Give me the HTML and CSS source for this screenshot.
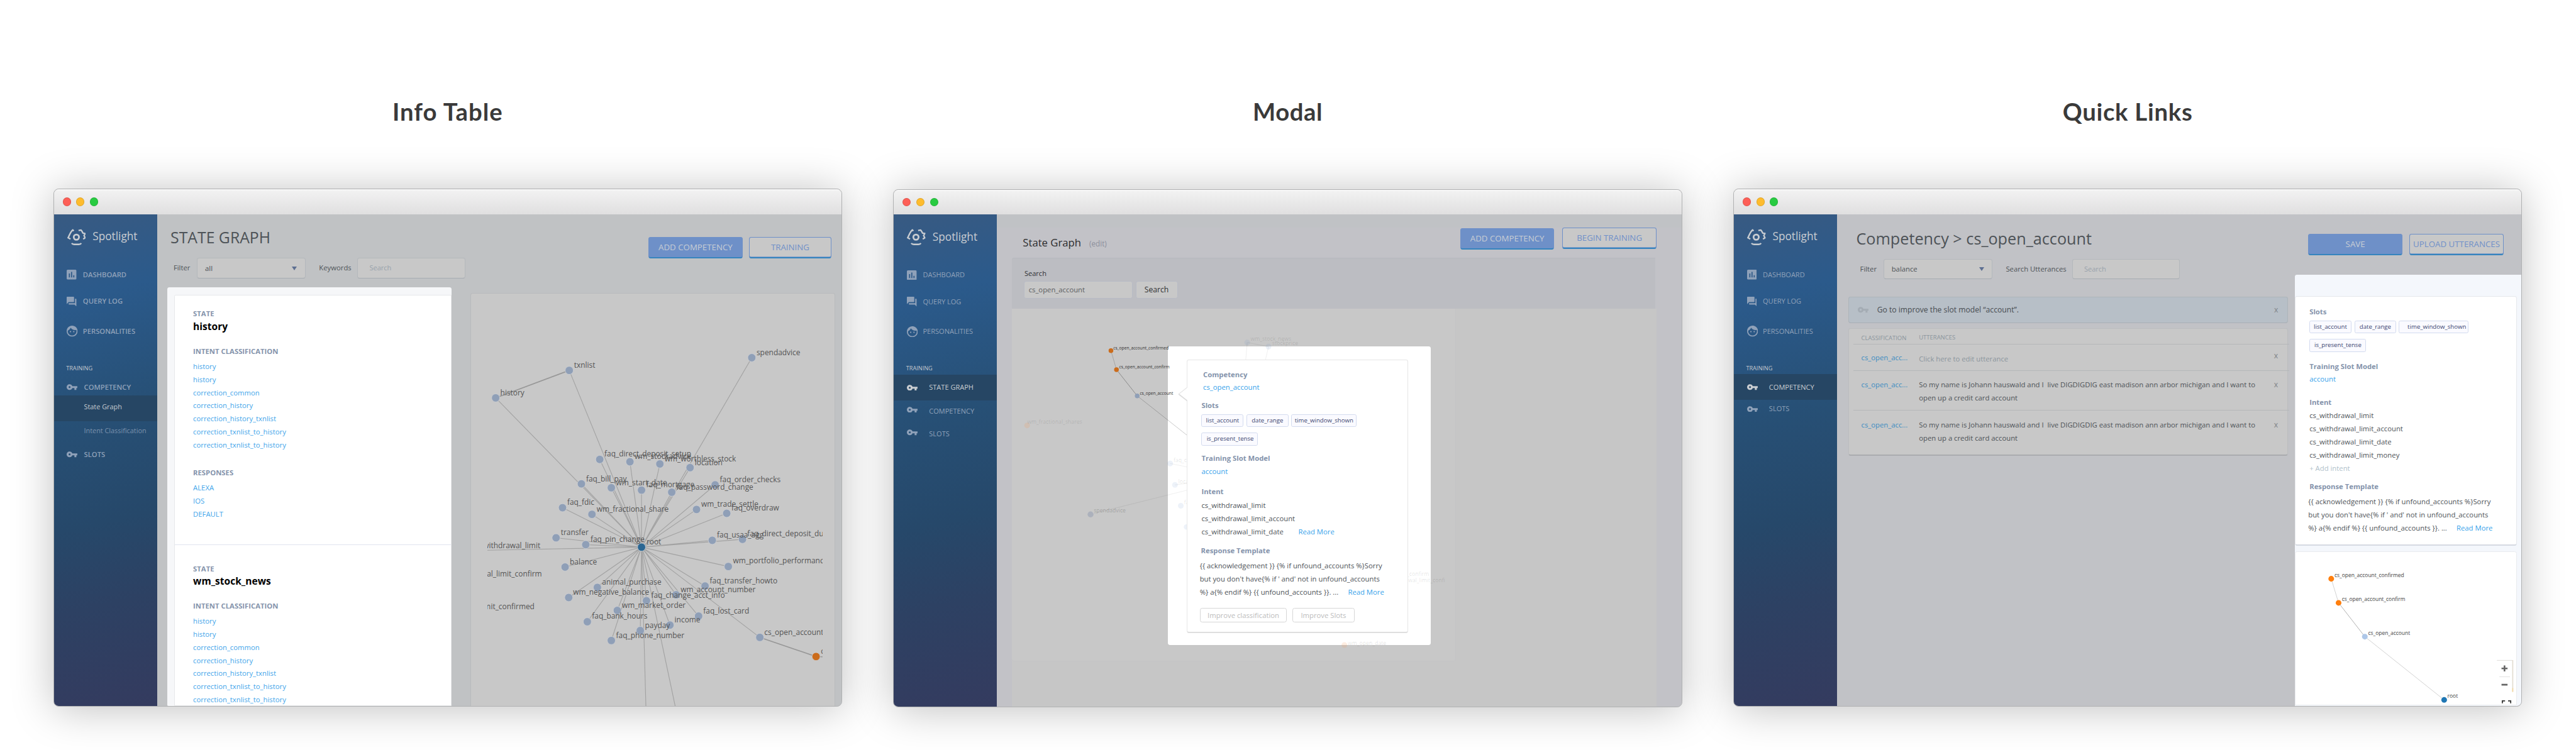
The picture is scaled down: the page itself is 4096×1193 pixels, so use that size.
FILE: index.html
```html
<!DOCTYPE html>
<html lang="en">
<head>
<meta charset="utf-8">
<title>Spotlight screens</title>
<link rel="stylesheet" href="styles.css">
</head>
<body>
<svg class="defs" aria-hidden="true">
  <symbol id="i-logo" viewBox="0 0 34 30"><g fill="none" stroke="currentColor" stroke-width="2.7"><circle cx="16.6" cy="15.3" r="4.8" stroke-width="3.2"/><path d="M9.2 1.2l2.6 2.6M9.8 2.2C6 5.5 4.6 10 1.6 16.2l4.2 2.4M20.6 3l4.4-.8c1.600 1.500 2.600 3.400 3.600 5.600l4 .8-2 3.800 2.200 4-3.800 2.400M8 26.300c1.200 1.700 2.600 2.200 4.600 2.200h8.400c2 0 3.600-.5 4.600-2.200"/></g></symbol>
  <symbol id="i-dash" viewBox="3 3 18 18"><path fill="currentColor" d="M19 3H5c-1.100 0-2 .9-2 2v14c0 1.100.9 2 2 2h14c1.100 0 2-.9 2-2V5c0-1.100-.9-2-2-2zM9 17H7v-7h2v7zm4 0h-2V7h2v10zm4 0h-2v-4h2v4z"/></symbol>
  <symbol id="i-log" viewBox="2 2 20 20"><path fill="currentColor" d="M21 6h-2v9H6v2c0 .55.45 1 1 1h11l4 4V7c0-.55-.45-1-1-1zm-4 6V3c0-.55-.45-1-1-1H3c-.55 0-1 .45-1 1v14l4-4h10c.55 0 1-.45 1-1z"/></symbol>
  <symbol id="i-face" viewBox="2 2 20 20"><path fill="currentColor" d="M9 11.750c-.69 0-1.250.56-1.250 1.250s.56 1.250 1.250 1.250 1.250-.56 1.250-1.250-.56-1.250-1.250-1.250zm6 0c-.69 0-1.250.56-1.250 1.250s.56 1.250 1.250 1.250 1.250-.56 1.250-1.250-.56-1.250-1.250-1.250zM12 2C6.480 2 2 6.480 2 12s4.480 10 10 10 10-4.480 10-10S17.520 2 12 2zm0 18c-4.410 0-8-3.590-8-8 0-.29.02-.58.05-.86 2.360-1.050 4.230-2.980 5.210-5.370C11.070 8.330 14.050 10 17.420 10c.78 0 1.530-.09 2.250-.26.21.71.33 1.470.33 2.260 0 4.410-3.590 8-8 8z"/></symbol>
  <symbol id="i-key" viewBox="1 6 22 12"><path fill="currentColor" d="M12.650 10C11.830 7.670 9.610 6 7 6c-3.310 0-6 2.690-6 6s2.690 6 6 6c2.610 0 4.830-1.670 5.650-4H17v4h4v-4h2v-4H12.650zM7 14c-1.100 0-2-.9-2-2s.9-2 2-2 2 .9 2 2-.9 2-2 2z"/></symbol>
</svg>

<main class="board">

  <!-- Info table -->
  <section class="col">
    <h1 class="title title-info">Info Table</h1>
    <div class="window">
      <div class="bar"><i class="dot red"></i><i class="dot amber"></i><i class="dot green"></i></div>
      <div class="app">
        <nav class="side side-bold">
          <div class="brand"><svg><use href="#i-logo"/></svg><span>Spotlight</span></div>
          <div class="nav nav-dash"><svg class="sq"><use href="#i-dash"/></svg><span>DASHBOARD</span></div>
          <div class="nav nav-log"><svg class="sq"><use href="#i-log"/></svg><span>QUERY LOG</span></div>
          <div class="nav nav-face"><svg class="rd"><use href="#i-face"/></svg><span>PERSONALITIES</span></div>
          <div class="group">TRAINING</div>
          <div class="nav key-nav comp-open"><svg class="key"><use href="#i-key"/></svg><span>COMPETENCY</span></div>
          <div class="sub active">State Graph</div>
          <div class="sub">Intent Classification</div>
          <div class="nav key-nav slots-open"><svg class="key"><use href="#i-key"/></svg><span>SLOTS</span></div>
        </nav>
        <div class="page page-info">
          <header class="head">
            <h2 class="h-state">STATE GRAPH</h2>
            <div class="btns"><span class="btn solid b-add">ADD COMPETENCY</span><span class="btn line b-train">TRAINING</span></div>
          </header>
          <div class="filters">
            <label class="lab lab-filter">Filter</label><div class="select">all<i class="caret"></i></div>
            <label class="lab lab-key">Keywords</label><div class="search">Search</div>
          </div>
          <div class="info-row">
            <div class="sheet">
              <div class="sheet-card">
                <article class="entry">
                  <h3>STATE</h3>
                  <p class="name">history</p>
                  <h3 class="mid">INTENT CLASSIFICATION</h3>
                  <ul><li>history</li><li>history</li><li>correction_common</li><li>correction_history</li><li>correction_history_txnlist</li><li>correction_txnlist_to_history</li><li>correction_txnlist_to_history</li></ul>
                  <h3 class="resp">RESPONSES</h3>
                  <ul><li>ALEXA</li><li>IOS</li><li>DEFAULT</li></ul>
                </article>
                <article class="entry second">
                  <h3>STATE</h3>
                  <p class="name">wm_stock_news</p>
                  <h3 class="mid">INTENT CLASSIFICATION</h3>
                  <ul><li>history</li><li>history</li><li>correction_common</li><li>correction_history</li><li>correction_history_txnlist</li><li>correction_txnlist_to_history</li><li>correction_txnlist_to_history</li></ul>
                </article>
              </div>
            </div>
            <div class="graph-panel">
              <svg class="graph" viewBox="890.9 536.4 612.5 755">
                <g class="edges">
                  <path class="thick" d="M906 727.1L1040.500 676.800"/>
                  <path d="M1172.600 1000L906 727.1"/>
                  <path d="M1172.600 1000L1040.500 676.800"/>
                  <path d="M1172.600 1000L1374.100 653.600"/>
                  <path d="M1172.600 1000L1096.200 839.600M1172.600 1000L1151.400 843.900M1172.600 1000L1206.100 847.900M1172.600 1000L1261.300 854.600M1172.600 1000L1062.700 884.300M1172.600 1000L1117.400 891.400M1172.600 1000V895.700M1172.600 1000L1227.800 899.600M1172.600 1000L1307.100 886.100"/>
                  <path d="M1172.600 1000L1028.200 927.900M1172.600 1000L1082 940M1172.600 1000L1273.100 931.100M1172.600 1000L1328.300 938.200M1172.600 1000L1016.400 982.900M1172.600 1000L1070.700 995.400M1172.600 1000L1301.900 987.500M1172.600 1000L1357.100 985.700M1172.600 1000L1032.900 1036.400M1172.600 1000L1331.200 1035.400"/>
                  <path d="M1172.600 1000L1091.900 1073.600M1172.600 1000L1039.500 1092.100M1172.600 1000L1288.700 1071.100M1172.600 1000L1235.800 1087.100M1172.600 1000L1181.600 1097.900M1172.600 1000L1128.300 1115.700M1172.600 1000L1073.500 1136.400M1172.600 1000L1276.900 1126.100M1172.600 1000L1224.500 1142.500M1172.600 1000L1170.300 1152.500M1172.600 1000L1117.400 1170.700M1172.600 1000L1388.800 1165"/>
                  <path d="M1172.600 1000L890 1005.700M1172.600 1000L1180.600 1292M1172.600 1000L1234.400 1292"/>
                  <path class="thick" d="M1388.800 1165L1491.600 1200L1503.400 1200.500"/>
                </g>
                <g class="nodes">
                  <circle cx="906" cy="727.1" r="7.4"/><circle cx="1040.5" cy="676.8" r="7.4"/><circle cx="1374.1" cy="653.6" r="7.4"/>
                  <circle cx="1096.2" cy="839.6" r="7.4"/><circle cx="1151.4" cy="843.9" r="7.4"/><circle cx="1206.1" cy="847.9" r="7.4"/><circle cx="1261.3" cy="854.6" r="7.4"/>
                  <circle cx="1062.7" cy="884.3" r="7.4"/><circle cx="1117.4" cy="891.4" r="7.4"/><circle cx="1172.6" cy="895.7" r="7.4"/><circle cx="1227.8" cy="899.6" r="7.4"/><circle cx="1307.1" cy="886.1" r="7.4"/>
                  <circle cx="1028.2" cy="927.9" r="7.4"/><circle cx="1082" cy="940" r="7.4"/><circle cx="1273.1" cy="931.1" r="7.4"/><circle cx="1328.3" cy="938.2" r="7.4"/>
                  <circle cx="1016.4" cy="982.9" r="7.4"/><circle cx="1070.7" cy="995.4" r="7.4"/><circle cx="1301.9" cy="987.5" r="7.4"/><circle cx="1357.1" cy="985.7" r="7.4"/>
                  <circle cx="1032.9" cy="1036.4" r="7.4"/><circle cx="1331.2" cy="1035.4" r="7.4"/><circle cx="1091.9" cy="1073.6" r="7.4"/><circle cx="1039.5" cy="1092.1" r="7.4"/>
                  <circle cx="1288.7" cy="1071.1" r="7.4"/><circle cx="1235.8" cy="1087.1" r="7.4"/><circle cx="1181.6" cy="1097.9" r="7.4"/><circle cx="1128.3" cy="1115.7" r="7.4"/>
                  <circle cx="1073.5" cy="1136.4" r="7.4"/><circle cx="1276.9" cy="1126.1" r="7.4"/><circle cx="1224.5" cy="1142.5" r="7.4"/><circle cx="1170.3" cy="1152.5" r="7.4"/>
                  <circle cx="1117.4" cy="1170.7" r="7.4"/><circle cx="1388.8" cy="1165" r="7.4"/>
                  <circle class="orange" cx="1491.6" cy="1200" r="7.4"/><circle class="root" cx="1172.6" cy="1000" r="7.4"/>
                </g>
                <g class="labels">
                  <text x="914.6" y="722.3">history</text><text x="1049.2" y="672">txnlist</text><text x="1382.800" y="648.600">spendadvice</text>
                  <text x="1104.800" y="834.600">faq_direct_deposit_setup</text><text x="1160" y="838.900">wm_stockadvice</text><text x="1214.700" y="842.900">wm_worthless_stock</text><text x="1269.900" y="850.100">location</text>
                  <text x="1071.300" y="879.600">faq_bill_pay</text><text x="1126" y="886.500">wm_start_date</text><text x="1181.200" y="890.700">faq_mortgage</text><text x="1236.400" y="895">faq_password_change</text><text x="1315.700" y="881.100">faq_order_checks</text>
                  <text x="1036.800" y="923">faq_fdic</text><text x="1090.600" y="935.700">wm_fractional_share</text><text x="1281.700" y="926">wm_trade_settle</text><text x="1336.900" y="933">faq_overdraw</text>
                  <text x="1025" y="978">transfer</text><text x="1079.300" y="990.500">faq_pin_change</text><text x="1181.600" y="994.500">root</text><text x="1310.500" y="982">faq_usaa_agg</text><text x="1366" y="980.500">faq_direct_deposit_due</text>
                  <text x="1041.500" y="1031.500">balance</text><text x="1339.800" y="1030">wm_portfolio_performance</text><text x="1100.500" y="1069">animal_purchase</text><text x="1047.600" y="1087.500">wm_negative_balance</text>
                  <text x="1297.300" y="1066.500">faq_transfer_howto</text><text x="1244" y="1082">wm_account_number</text><text x="1190.200" y="1093">faq_change_acct_info</text><text x="1136.900" y="1111.500">wm_market_order</text>
                  <text x="1082" y="1131">faq_bank_hours</text><text x="1285.500" y="1121.500">faq_lost_card</text><text x="1233" y="1138">income</text><text x="1178.900" y="1148">payday</text><text x="1126" y="1166">faq_phone_number</text>
                  <text x="1397" y="1160.500">cs_open_account</text><text x="1500.400" y="1195.500">cs</text>
                  <text class="end" x="987.6" y="1002">cs_withdrawal_limit</text><text class="end" x="990.5" y="1054.2">cs_withdrawal_limit_confirm</text><text class="end" x="977" y="1113">cs_withdrawal_limit_confirmed</text>
                </g>
              </svg>
            </div>
          </div>
        </div>
      </div>
    </div>
  </section>

  <!-- Modal -->
  <section class="col col-modal">
    <h1 class="title title-modal">Modal</h1>
    <div class="window">
      <div class="bar"><i class="dot red"></i><i class="dot amber"></i><i class="dot green"></i></div>
      <div class="app">
        <nav class="side">
          <div class="brand"><svg><use href="#i-logo"/></svg><span>Spotlight</span></div>
          <div class="nav nav-dash"><svg class="sq"><use href="#i-dash"/></svg><span>DASHBOARD</span></div>
          <div class="nav nav-log"><svg class="sq"><use href="#i-log"/></svg><span>QUERY LOG</span></div>
          <div class="nav nav-face"><svg class="rd"><use href="#i-face"/></svg><span>PERSONALITIES</span></div>
          <div class="group">TRAINING</div>
          <div class="nav key-nav wide active"><svg class="key"><use href="#i-key"/></svg><span>STATE GRAPH</span></div>
          <div class="nav key-nav wide m-comp"><svg class="key up"><use href="#i-key"/></svg><span>COMPETENCY</span></div>
          <div class="nav key-nav wide m-slots"><svg class="key up"><use href="#i-key"/></svg><span>SLOTS</span></div>
        </nav>
        <div class="page page-modal">
          <header class="head head-modal">
            <h2 class="h-small">State Graph <span class="edit">(edit)</span></h2>
            <div class="btns"><span class="btn solid b-add2">ADD COMPETENCY</span><span class="btn line b-begin">BEGIN TRAINING</span></div>
          </header>
          <div class="search-panel">
            <label class="search-label">Search</label>
            <div class="search-line"><div class="field">cs_open_account</div><div class="go">Search</div></div>
          </div>
          <div class="canvas">
            <div class="canvas-card"></div>
            <div class="modal">
              <div class="pop">
                <svg class="tip" viewBox="0 0 18 28"><path d="M18 0.500L1.500 13.500L18 26.500" fill="#fff" stroke="#e6e6e6" stroke-width="1.3"/><path d="M1.500 14L17 26" stroke="#dedede" stroke-width="2"/></svg>
                <h3 class="x29">Competency</h3>
                <p class="ln link x29 m1">cs_open_account</p>
                <h3 class="x26 m10">Slots</h3>
                <div class="chips x26"><span class="chip c1">list_account</span><span class="chip c2">date_range</span><span class="chip c3">time_window_shown</span><span class="chip c4">is_present_tense</span></div>
                <h3 class="x26 m13">Training Slot Model</h3>
                <p class="ln link x26 m2">account</p>
                <h3 class="x26 m14">Intent</h3>
                <p class="ln x26 m4">cs_withdrawal_limit</p><p class="ln x26">cs_withdrawal_limit_account</p><p class="ln x26">cs_withdrawal_limit_date<span class="link more1">Read More</span></p>
                <h3 class="x25 m12">Response Template</h3>
                <p class="ln x23 m6">{{ acknowledgement }} {% if unfound_accounts %}Sorry</p><p class="ln x23">but you don't have{% if ' and' not in unfound_accounts</p><p class="ln x23">%} a{% endif %} {{ unfound_accounts }}. ...<span class="link more2">Read More</span></p>
                <div class="ghosts"><span class="ghost g1">Improve classification</span><span class="ghost g2">Improve Slots</span></div>
              </div>
            </div>
            <svg class="overlay" viewBox="1849 564.600 1178 727">
              <g class="faint-edges"><path d="M2279 626.500L2276.400 658M2318 634L2312.400 658M2279 626.500L2318 634"/><path d="M1999 939L2169 896.600M2138.300 847.700L2169 854M2147 886.700L2169 884"/></g>
              <g class="live-edges"><path d="M2030 641.300L2040.100 676" opacity=".6"/><path d="M2040.100 676L2078 724"/><path d="M2078 724L2169 796" opacity=".7"/></g>
              <g class="faint-nodes"><circle cx="2279" cy="626.5" r="5.2"/><circle cx="2318" cy="634" r="5.2"/><circle cx="1992.7" cy="940.7" r="5.4" class="dim"/><circle cx="2138.3" cy="847.7" r="5.2"/><circle cx="2147" cy="886.7" r="5.2"/><circle cx="2157.7" cy="925" r="5.2"/><circle cx="2168" cy="963.7" r="4.800"/><circle class="fo" cx="1876.8" cy="778" r="5.2"/><circle class="fo" cx="2456.7" cy="1179.600" r="5.2"/></g>
              <g class="faint-labels"><text x="2285.200" y="623.500">wm_stock_news</text><text x="2324.600" y="631">stockprice</text><text x="1998.700" y="937.500" class="dim">spendadvice</text><text x="1876.800" y="775">wm_fractional_shares</text><text x="2144.300" y="844.500">faq_change</text><text x="2153" y="884">location</text><text x="2163.700" y="921.700">faq_bill</text><text class="end" x="2611.300" y="1053">cs_withdrawal_limit_confirm</text><text class="end" x="2640.800" y="1064.800">cs_withdrawal_limit_confi</text><text x="2462.800" y="1179">wm_open_date</text></g>
              <g class="live-nodes"><circle cx="2030" cy="641.3" r="4.3"/><circle cx="2040.1" cy="676" r="4.3"/><circle class="blue" cx="2078" cy="724" r="4.3"/></g>
              <g class="live-labels"><text x="2034.300" y="639.300">cs_open_account_confirmed</text><text x="2045" y="673.700">cs_open_account_confirm</text><text x="2082.800" y="722">cs_open_account</text></g>
            </svg>
          </div>
        </div>
      </div>
    </div>
  </section>

  <!-- Quick links -->
  <section class="col">
    <h1 class="title title-links">Quick Links</h1>
    <div class="window">
      <div class="bar"><i class="dot red"></i><i class="dot amber"></i><i class="dot green"></i></div>
      <div class="app">
        <nav class="side">
          <div class="brand"><svg><use href="#i-logo"/></svg><span>Spotlight</span></div>
          <div class="nav nav-dash"><svg class="sq"><use href="#i-dash"/></svg><span>DASHBOARD</span></div>
          <div class="nav nav-log"><svg class="sq"><use href="#i-log"/></svg><span>QUERY LOG</span></div>
          <div class="nav nav-face"><svg class="rd"><use href="#i-face"/></svg><span>PERSONALITIES</span></div>
          <div class="group">TRAINING</div>
          <div class="nav key-nav wide active"><svg class="key"><use href="#i-key"/></svg><span>COMPETENCY</span></div>
          <div class="nav key-nav wide q-slots"><svg class="key"><use href="#i-key"/></svg><span>SLOTS</span></div>
        </nav>
        <div class="page page-links">
          <header class="head head-links">
            <h2 class="h-reg">Competency &gt; cs_open_account</h2>
            <div class="btns"><span class="btn solid b-save">SAVE</span><span class="btn line b-up">UPLOAD UTTERANCES</span></div>
          </header>
          <div class="filters filters-links">
            <label class="lab lab-filter">Filter</label><div class="select">balance<i class="caret"></i></div>
            <label class="lab lab-utt">Search Utterances</label><div class="search">Search</div>
          </div>
          <div class="links-row">
            <div class="left">
              <div class="banner"><svg class="key"><use href="#i-key"/></svg><span class="msg">Go to improve the slot model “account”.</span><span class="x">x</span></div>
              <div class="table">
                <div class="tr th"><span>CLASSIFICATION</span><span class="utt-h">UTTERANCES</span></div>
                <div class="tr r1"><span class="link-dim">cs_open_acc...</span><span class="hint">Click here to edit utterance</span><span class="x">x</span></div>
                <div class="tr r2"><span class="link-dim">cs_open_acc...</span><span>So my name is Johann hauswald and I&nbsp; live DIGDIGDIG east madison ann arbor michigan and I want to<br>open up a credit card account</span><span class="x">x</span></div>
                <div class="tr r3"><span class="link-dim">cs_open_acc...</span><span>So my name is Johann hauswald and I&nbsp; live DIGDIGDIG east madison ann arbor michigan and I want to<br>open up a credit card account</span><span class="x">x</span></div>
              </div>
            </div>
            <aside class="pane">
              <div class="quick">
                <h3>Slots</h3>
                <div class="chips"><span class="chip q1">list_account</span><span class="chip q2">date_range</span><span class="chip q3">time_window_shown</span><span class="chip q4">is_present_tense</span></div>
                <h3 class="m16">Training Slot Model</h3>
                <p class="ln link m2">account</p>
                <h3 class="m19">Intent</h3>
                <p class="ln m4">cs_withdrawal_limit</p><p class="ln">cs_withdrawal_limit_account</p><p class="ln">cs_withdrawal_limit_date</p><p class="ln">cs_withdrawal_limit_money</p><p class="ln add">+ Add intent</p>
                <h3 class="m11">Response Template</h3>
                <p class="ln pull m6">{{ acknowledgement }} {% if unfound_accounts %}Sorry</p><p class="ln pull">but you don't have{% if ' and' not in unfound_accounts</p><p class="ln pull">%} a{% endif %} {{ unfound_accounts }}. ...<span class="link more2">Read More</span></p>
              </div>
              <div class="mini">
                <svg class="mini-graph" viewBox="4195 1009.300 403.700 281">
                  <g class="live-edges"><path d="M4260.300 1058.300L4273.700 1102.300" opacity=".6"/><path d="M4273.700 1102.300L4321.700 1164.100"/><path d="M4321.700 1164.100L4466.700 1279.800" opacity=".6"/></g>
                  <g class="mini-nodes"><circle cx="4260.3" cy="1058.3" r="5.2"/><circle cx="4273.7" cy="1102.3" r="5.2"/><circle class="blue" cx="4321.7" cy="1164.1" r="5.2"/><circle class="root" cx="4466.700" cy="1279.800" r="5.2"/></g>
                  <g class="mini-labels"><text x="4266.300" y="1055.600">cs_open_account_confirmed</text><text x="4279.700" y="1099.300">cs_open_account_confirm</text><text x="4327.700" y="1161.200">cs_open_account</text><text x="4472.700" y="1276.300">root</text></g>
                  <g fill="none">
                    <path d="M4563 1207.500H4592" stroke="#dcdad6" stroke-width="1"/><path d="M4592 1207V1265" stroke="#e2ddd2" stroke-width="2"/><path d="M4592 1258V1265" stroke="#f3d9a4" stroke-width="2"/>
                    <path d="M4571.500 1222.300H4582.500M4577 1216.800V1227.800M4571.500 1252H4582.500" stroke="#666" stroke-width="3"/>
                    <path d="M4567.500 1237.500H4587" stroke="#ddd" stroke-width="1"/>
                    <path d="M4573 1286V1281.500H4578M4583.500 1281.500H4588.300V1286" stroke="#333" stroke-width="2"/>
                  </g>
                </svg>
              </div>
            </aside>
          </div>
        </div>
      </div>
    </div>
  </section>
</main>
</body>
</html>
```
FILE: styles.css
```css
*{box-sizing:border-box;margin:0;padding:0}
html{font-size:8.7px;background:#fff}
body{font-family:"Open Sans","Noto Sans",sans-serif;font-size:1.3rem;color:#4d5257;white-space:nowrap;overflow:hidden}
ul{list-style:none}
.defs{position:absolute;width:0;height:0}

.board{display:flex;gap:9.32rem;padding:17.4rem 0 0 9.73rem;height:1193px;overflow:hidden}
.col{flex:none;width:144.2rem}
.title{font:700 4.4rem/6rem Lato,sans-serif;color:#3a3a3a;text-align:center;margin-bottom:11.13rem}
.title-info{letter-spacing:.12rem}
.title-modal{letter-spacing:.06rem;margin-bottom:11.23rem}
.title-links{letter-spacing:.085rem}

.window{height:94.7rem;border:.1rem solid #b0b1b2;border-radius:.95rem;overflow:hidden;box-shadow:0 .4rem 7.6rem rgba(0,0,0,.25);background:#c2c3c7;display:flex;flex-direction:column}
.bar{height:4.5rem;flex:none;display:flex;align-items:center;gap:1rem;padding-left:1.6rem;background:linear-gradient(#fafafa 0,#f1f1f1 8%,#e0dfe0 100%)}
.col-modal .bar{height:4.47rem}
.dot{width:1.5rem;height:1.5rem;border-radius:50%;border:.1rem solid rgba(0,0,0,.12)}
.red{background:#fd5f57}.amber{background:#febc2e}.green{background:#28cb41}
.app{flex:1;display:flex;min-height:0}

/* sidebar */
.side{width:18.87rem;flex:none;padding-top:2.17rem;background:linear-gradient(167deg,#385a82 0,#2b5a8b 17%,#275076 40%,#26486a 62%,#2d4163 78%,#343b5f 100%);color:#8fa1b9;font-size:1.27rem}
.brand{height:4rem;display:flex;align-items:center;padding-left:2.43rem;gap:1.25rem;font-size:1.98rem;line-height:4rem;color:#c9cdd2}
.brand svg{width:3.4rem;height:3rem}
.nav{height:3rem;display:flex;align-items:center;padding-left:2.39rem;line-height:3rem}
.side-bold .nav{font-weight:600;font-size:1.29rem}
.sq{width:1.8rem;height:1.8rem;margin-right:1.12rem}
.rd{width:2rem;height:2rem;margin-right:.92rem}
.key{width:1.95rem;height:1.1rem;margin-right:1.17rem;flex:none}
.key.up{position:relative;top:-.26rem}
.nav-dash{margin-top:3.4rem}
.nav-log{margin-top:1.9rem}
.nav-face{margin-top:2.45rem}
.group{margin-top:4.22rem;height:2rem;line-height:2rem;padding-left:2.25rem;font-size:1.05rem;color:#c3c8ce}
.key-nav{height:2.8rem}
.wide .key{margin-right:2.1rem}
.comp-open{margin-top:1.13rem;margin-bottom:.1rem}
.sub{height:2.8rem;margin-top:.37rem;line-height:2.8rem;padding-left:5.5rem;font-size:1.25rem;color:#7c92ad}
.sub.active{height:4.7rem;margin-top:0;line-height:4.1rem;color:#c6cbd0;background:#264664}
.slots-open{margin-top:1.5rem}
.wide.active{height:4.7rem;margin-top:.15rem;background:#264664;color:#c9cdd1}
.m-comp{margin-top:.57rem}
.m-slots{margin-top:1.4rem}
.q-slots{margin-top:.25rem}

/* page header and filters */
.page{flex:1;min-width:0;display:flex;flex-direction:column}
.page-info{background:#c0c2c4}
.page-modal{background:linear-gradient(#c0c2c5 0,#c0c2c5 2.4rem,#c2c2c7 2.4rem)}
.page-links{background:#c1c2c6}
.head{height:8.04rem;flex:none;display:flex;justify-content:space-between;padding-left:2.45rem}
.h-state{font-weight:400;font-size:2.85rem;line-height:4rem;margin-top:2.4rem}
.h-reg{font-weight:400;font-size:2.9rem;line-height:4rem;margin-top:2.49rem}
.head-links{height:8.16rem;padding-left:3.5rem}
.head-modal{height:7.87rem;padding-left:4.7rem}
.h-small{font-weight:500;font-size:1.92rem;line-height:3rem;margin-top:3.62rem;color:#2c2c2e}
.edit{font-weight:400;font-size:1.35rem;color:#8c8f9c;margin-left:1rem}
.btns{display:flex;align-items:flex-start;gap:1.2rem;padding:4.17rem 1.9rem 0 0}
.btn{height:3.9rem;border-radius:.4rem;font-size:1.53rem;line-height:3.45rem;text-align:center;border:.12rem solid #6e90c8;border-bottom:.3rem solid #3584be;color:#7090c9}
.solid{background:#6e90c8;color:#c8cdd4}
.line{background:#c8c8c8;box-shadow:inset 0 -.1rem #6e90c8}
.b-add{width:17.2rem}.b-train{width:15rem}
.head-modal .btns{padding:2.36rem 4.6rem 0 0;gap:1.5rem}
.b-add2{width:17.2rem;margin-top:.2rem}.b-begin{width:17.16rem}
.head-links .btns{padding:3.57rem 3.3rem 0 0;gap:1.34rem}
.b-save,.b-up{width:17.16rem}
.filters{height:3.7rem;flex:none;display:flex;align-items:center;padding-left:3rem;line-height:3.7rem}
.lab-filter{width:4.3rem}
.select,.search{height:3.7rem;line-height:3.45rem;background:#c8c8c8;border:.1rem solid #b4b8bc;border-bottom:.2rem solid #a7acb2;border-radius:.4rem}
.select{width:19.8rem;padding:0 1.4rem 0 1.35rem;display:flex;justify-content:space-between;align-items:center}
.caret{border:.55rem solid transparent;border-top:.7rem solid #5d6f92;border-bottom:0}
.lab-key{margin-left:2.5rem;width:7rem}
.search{width:19.73rem;padding-left:2.1rem;color:#98a2ab;font-size:1.27rem}
.filters-links{padding-left:4.2rem;margin-bottom:-.8rem}
.filters-links .select{width:19.9rem}
.lab-utt{margin-left:2.45rem;width:12.1rem}

/* info table */
.info-row{flex:1;min-height:0;display:flex;padding-left:1.87rem;margin-top:1.7rem}
.sheet{width:52rem;background:#f6f7f9;border-radius:.4rem .4rem .2rem .2rem;padding:1.33rem 0 0 1.2rem;overflow:hidden}
.sheet-card{background:#fff;border:.1rem solid #e6e8ea;border-radius:.3rem 0 0 0;height:100%}
.entry{padding:2.35rem 0 0 3.4rem;height:45.5rem}
.second{border-top:.1rem solid #e0e4ee;padding-top:3.3rem}
h3{font-size:1.3rem;line-height:2rem;font-weight:700;color:#8493ab}
.name{font-weight:700;font-size:1.79rem;line-height:2.4rem;margin-top:.14rem;color:#000}
.mid{margin:2.26rem 0 .67rem}
.resp{margin:2.73rem 0 .7rem}
.entry li{line-height:2.4rem;color:#42a5ea}
.graph-panel{width:66.7rem;margin:.94rem 0 0 3.37rem;background:#c8c8c8;border:.1rem solid #b9bbbd;border-bottom:0;border-radius:.4rem .4rem 0 0;padding-left:3.02rem}
.graph{display:block;width:61.25rem;height:75.5rem}
.edges path{fill:none;stroke:#a2a2a2;stroke-width:1.3}
.edges .thick{stroke:#989898;stroke-width:1.9}
.nodes circle{fill:#8f9fb7;stroke:#cdcfd2;stroke-width:1}
.nodes .orange{fill:#cb6c1c}.nodes .root{fill:#2b6793}
.labels{font-size:13.7px;fill:#555}
.end{text-anchor:end}

/* modal */
.search-panel{width:117.5rem;height:9.36rem;flex:none;margin-left:2.76rem;padding:2rem 0 0 2.15rem;background:#bcbdc2;border-top:.1rem solid #b6b8be;border-radius:.4rem 0 0 0}
.search-label{display:block;line-height:1.6rem;color:#2f3033;font-size:1.27rem;padding-left:.1rem}
.search-line{display:flex;gap:.5rem;margin-top:.55rem}
.field,.go{height:3.2rem;line-height:2.95rem;background:#c8c8c8;border:.1rem solid #b8bbc5;border-radius:.4rem}
.field{width:19.9rem;padding-left:.75rem;color:#5a5c5f}
.go{width:7.7rem;text-align:center;font-size:1.4rem;font-weight:500;color:#2f3033}
.canvas{position:relative;flex:1;width:117.8rem;margin-left:2.7rem;background:#c6c6c6}
.canvas-card{width:81.2rem;height:64.5rem;background:#c8c8c8;border-right:.1rem solid #c4c4c5;border-bottom:.1rem solid #c4c4c5;border-radius:0 0 .5rem .5rem}
.modal{position:absolute;left:28.5rem;top:6.94rem;width:48.1rem;height:54.5rem;background:#fff;border-radius:.4rem;padding:2.33rem 0 0 3.45rem}
.overlay{position:absolute;left:0;top:0;width:117.8rem;height:72.7rem;z-index:1}
.pop{position:relative;z-index:2;width:40.53rem;height:50.07rem;background:#fff;border:.1rem solid #e6e6e6;border-bottom:.25rem solid #dedede;border-radius:.4rem;padding-top:1.69rem}
.tip{position:absolute;left:-1.75rem;top:4.85rem;width:1.8rem;height:2.8rem}
.ln{line-height:2.4rem}
.link{color:#37a2ea}
.x29{margin-left:2.9rem}.x26{margin-left:2.6rem}.x25{margin-left:2.5rem}.x23{margin-left:2.28rem}
.m1{margin-top:.17rem}.m2{margin-top:.22rem}.m4{margin-top:.4rem}.m6{margin-top:.62rem}.m10{margin-top:1.04rem}
.m11{margin-top:1.1rem}.m12{margin-top:1.2rem}.m13{margin-top:1.32rem}.m14{margin-top:1.47rem}.m16{margin-top:1.6rem}.m19{margin-top:1.9rem}
.more1{margin-left:2.7rem}.more2{margin-left:1.75rem}
.chips{display:flex;flex-wrap:wrap;gap:1.03rem .5rem;margin-top:.62rem;width:32rem}
.chip{height:2.36rem;line-height:2.15rem;border:.1rem solid #d3dbef;border-radius:.3rem;background:#fafaff;color:#3a4570;font-size:1.11rem;text-align:center}
.c1{width:7.7rem}.c2{width:7.7rem}.c3{width:12rem}.c4{width:10.3rem;padding-left:.2rem}
.ghosts{display:flex;gap:1rem;margin:1.58rem 0 0 2.28rem;color:#bcbcbc}
.ghost{height:2.75rem;line-height:2.45rem;border:.15rem solid #d6d6d6;border-radius:.4rem;text-align:center}
.g1{width:15.95rem}.g2{width:11.35rem}
.faint-edges path{fill:none;stroke:rgba(0,0,0,.06);stroke-width:1.2}
.live-edges path{fill:none;stroke:rgba(0,0,0,.32);stroke-width:1.1}
.faint-nodes circle{fill:rgba(90,140,200,.11)}
.faint-nodes .dim{fill:rgba(120,135,165,.35)}
.faint-nodes .fo{fill:rgba(250,150,80,.17)}
.faint-labels{font-size:10px;fill:rgba(0,0,0,.13)}
.faint-labels .dim{fill:rgba(0,0,0,.22)}
.live-nodes circle{fill:#cb6c1c}
.live-nodes .blue{fill:#8f9fb7}
.live-labels{font-size:7.7px;fill:#333}

/* quick links */
.links-row{flex:1;min-height:0;display:flex;padding-left:2.05rem}
.left{width:80.33rem;margin-right:1.25rem;padding-top:4.01rem}
.banner{height:4.87rem;display:flex;align-items:center;padding:0 1.65rem 0 1.65rem;background:#b7bfc7;border:.1rem solid #adb4ba;border-bottom:.2rem solid #a9afb5;border-radius:.4rem;color:#484d52;font-size:1.4rem}
.banner .key{color:#a4acb4;margin-right:1.55rem}
.banner .msg{flex:1}
.x{font-size:1.4rem;color:#7f8387}
.table{height:23.28rem;margin-top:.97rem;background:#c8c8c8;border:.1rem solid #bbbdbf;border-bottom:.25rem solid #aaacaf;border-radius:.4rem}
.tr{display:grid;grid-template-columns:10.53rem 64.9rem 2rem;margin:0 -.4rem 0 .87rem;padding-left:1.4rem;border-bottom:.12rem solid #b5b7b9;line-height:2.43rem}
.th{height:2.85rem;padding-top:.36rem;font-size:1.09rem;color:#8b959d}
.utt-h{margin-top:-.12rem}
.r1{height:4.82rem;padding-top:1.15rem}
.hint{color:#8b959d;padding-top:.15rem}
.r1 .x{margin-top:-.4rem}
.r2{height:7.18rem;padding-top:1.22rem}
.r3{padding-top:1.4rem;border-bottom:0}
.link-dim{color:#3b8cc2}
.pane{flex:1;background:#f4f7fc;border-radius:.4rem 0 0 0;padding-top:3.93rem}
.quick{width:40.57rem;height:45.65rem;background:#fff;border:.1rem solid #e6e8ec;border-bottom:.25rem solid #d6dae2;border-radius:.4rem;padding:1.74rem 0 0 2.6rem}
.quick .chips{gap:1.03rem .55rem}
.chip.q1,.chip.q2{width:7.66rem}.q3{width:12.83rem;padding-left:1.2rem;margin-left:-.15rem;line-height:2.05rem}.q4{width:10.3rem;padding-left:.1rem}
.add{color:#b0bfca}
.pull{margin-left:-.22rem}
.mini{width:40.57rem;height:28.17rem;margin-top:1.05rem;background:#fff;border:.1rem solid #e9ebee;border-radius:.4rem .4rem 0 0}
.mini-graph{display:block;width:40.37rem;height:28.1rem}
.mini-nodes circle{fill:#ff7f0e}
.mini-nodes .blue{fill:#aec7e8}.mini-nodes .root{fill:#1f77b4}
.mini-labels{font-size:9.7px;fill:#444}
```
